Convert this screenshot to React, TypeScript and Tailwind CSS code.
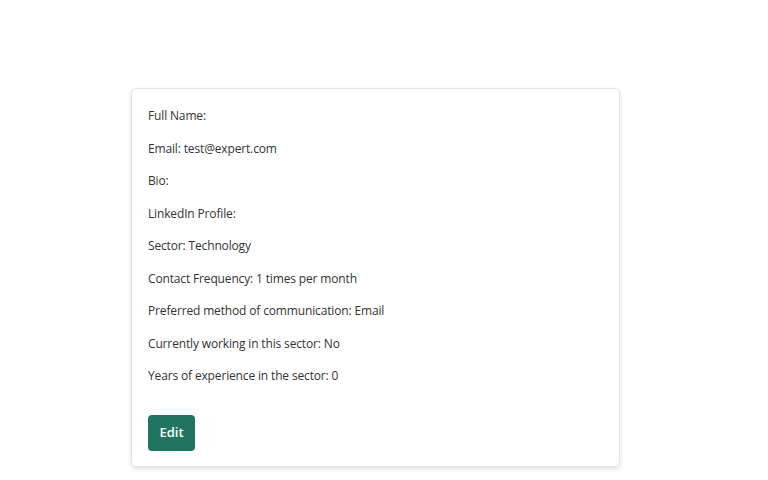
export default function App() {
  const rows = [
    "Full Name:",
    "Email: test@expert.com",
    "Bio:",
    "LinkedIn Profile:",
    "Sector: Technology",
    "Contact Frequency: 1 times per month",
    "Preferred method of communication: Email",
    "Currently working in this sector: No",
    "Years of experience in the sector: 0",
  ];
  return (
    <div className="w-[768px] h-[480px] bg-white pt-[88px] pl-[131px]" style={{ fontFamily: '"Open Sans", "Noto Sans", sans-serif' }}>
      <div className="w-[489px] h-[379px] rounded-[5px] border border-[#e4e4e4] shadow-[0_2px_5px_rgba(0,0,0,0.12)] pl-[16px] pt-[19px]">
        <div className="flex flex-col gap-[16px]">
          {rows.map((r) => (
            <p key={r} className="text-[12px] leading-[16.5px] text-[#333] tracking-[-0.15px]">{r}</p>
          ))}
        </div>
        <button className="mt-[30px] w-[47px] h-[36px] rounded-[4px] bg-[#217560] text-white text-[13px] font-semibold">Edit</button>
      </div>
    </div>
  );
}
